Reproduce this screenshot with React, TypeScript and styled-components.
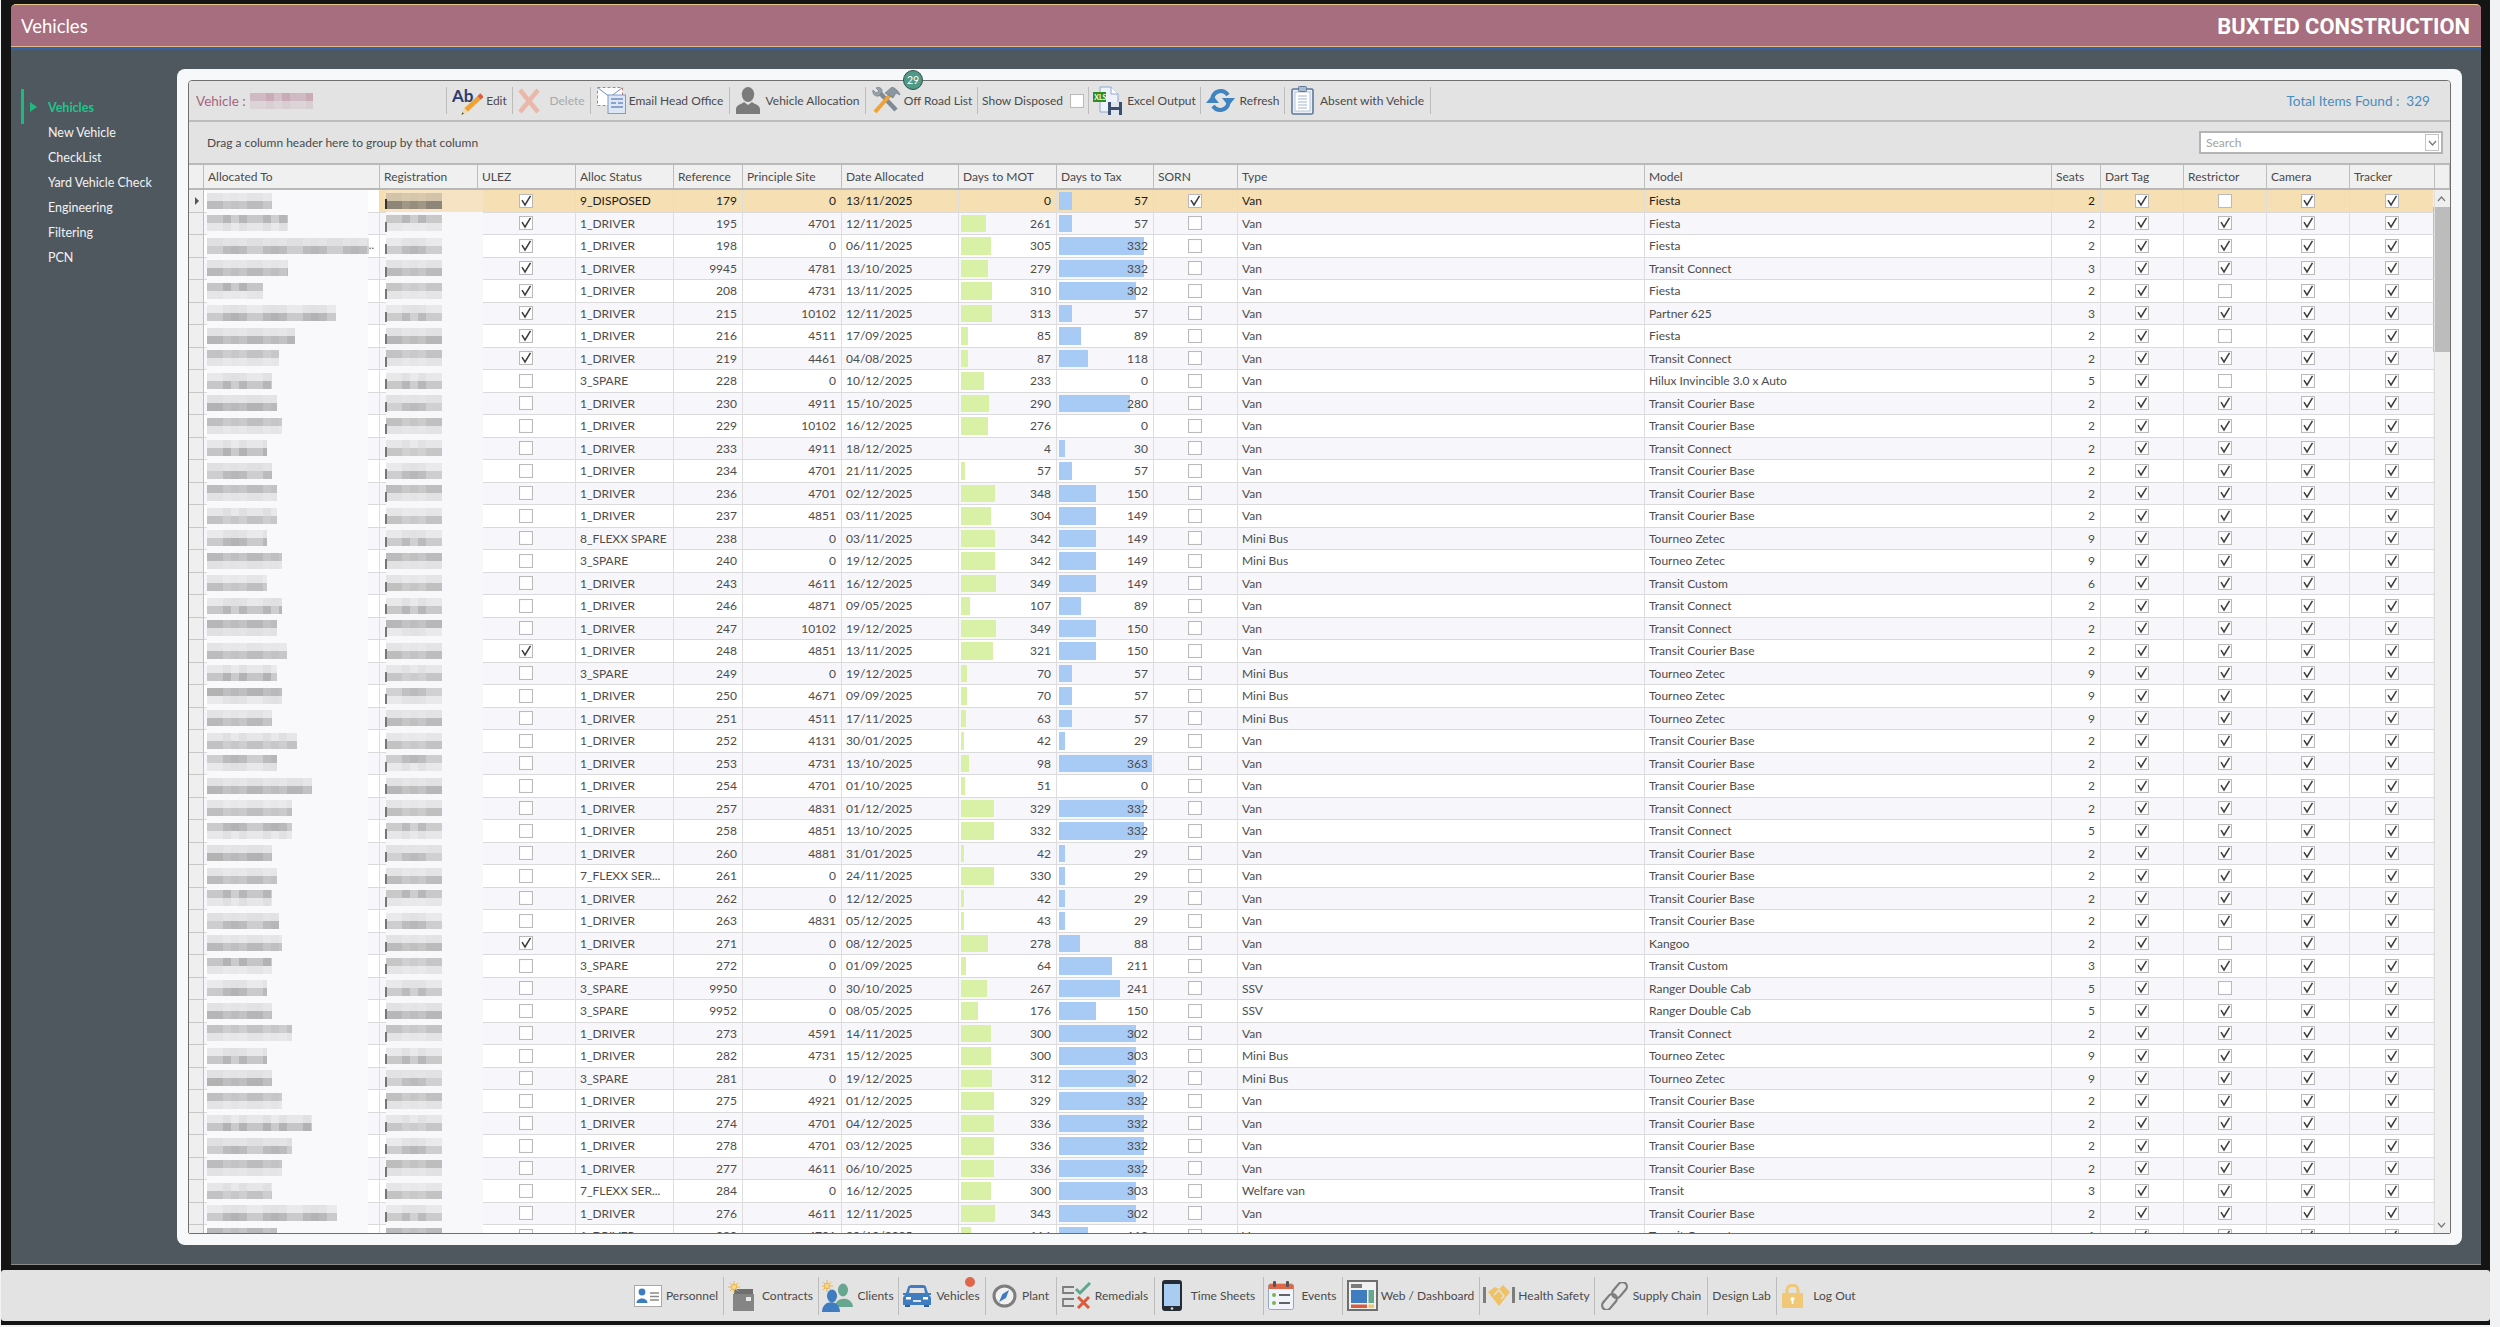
import React from 'react';
import styled, { createGlobalStyle } from 'styled-components';

const GlobalStyle = createGlobalStyle`
    * { box-sizing: border-box; }
    html, body { margin: 0; padding: 0; }
    body {
        width: 2500px;
        height: 1327px;
        overflow: hidden;
        background: #f1f2f3;
        font-family: Lato, 'Open Sans', sans-serif;
        font-size: 12px;
        color: #4a4a4a;
    }
`;

const COLUMNS = '15px 176px 98px 98px 98px 69px 99px 117px 98px 97px 84px 407px 407px 49px 83px 83px 83px 85px';

/* ---------- frame ---------- */

const Shell = styled.div`
    width: 2489px;
    height: 1325px;
    margin-left: 1px;
    padding-top: 4px;
    background: #141414;
    display: flex;
    flex-direction: column;
`;

const TitleBar = styled.header`
    height: 46px;
    margin: 0 9px 0 10px;
    padding: 0 11px 0 10px;
    background: #a76e80;
    border-top: 1px solid #e8c88a;
    border-bottom: 3px solid #2f62a8;
    box-shadow: inset 0 -1px 0 #e3b98c;
    border-radius: 5px 5px 0 0;
    display: flex;
    align-items: center;
    justify-content: space-between;
    color: #fff;
`;

const PageTitle = styled.h1`
    margin: 0;
    font-size: 18.5px;
    font-weight: 400;
`;

const Company = styled.div`
    font-family: Roboto, 'Liberation Sans', sans-serif;
    font-size: 21.9px;
    font-weight: 700;
`;

const Main = styled.main`
    flex: 1;
    min-height: 0;
    margin: 0 9px 0 10px;
    background: #50585f;
    display: flex;
    padding: 19px 19px 19px 0;
`;

const Sidebar = styled.nav`
    width: 166px;
    padding-top: 26px;
`;

const SideItem = styled.div<{ $active?: boolean }>`
    position: relative;
    height: 25px;
    padding-left: 37px;
    line-height: 25px;
    font-size: 12.5px;
    color: ${(p) => (p.$active ? '#22c48a' : '#f2f2f2')};
    font-weight: ${(p) => (p.$active ? 700 : 400)};
    ${(p) =>
        p.$active &&
        `
        &::before {
            content: '';
            position: absolute;
            left: 10px;
            top: -6px;
            width: 3px;
            height: 35px;
            background: #1db97f;
        }
        &::after {
            content: '';
            position: absolute;
            left: 19px;
            top: 7px;
            border-left: 7px solid #1db97f;
            border-top: 5px solid transparent;
            border-bottom: 5px solid transparent;
        }
    `}
`;

const Card = styled.section`
    flex: 1;
    min-width: 0;
    padding: 11px;
    background: #f7f8fa;
    border-radius: 8px;
    display: flex;
`;

const Panel = styled.div`
    flex: 1;
    min-width: 0;
    border: 1px solid #6f6f6f;
    border-radius: 4px 4px 2px 2px;
    display: flex;
    flex-direction: column;
    background: #fff;
`;

/* ---------- toolbar ---------- */

const Toolbar = styled.div`
    height: 41px;
    flex: none;
    background: #e3e3e3;
    border-bottom: 2px solid #bdbdbd;
    border-radius: 3px 3px 0 0;
    display: flex;
    align-items: center;
`;

const VehicleBox = styled.div`
    width: 257px;
    padding-left: 7px;
    display: flex;
    align-items: center;
    gap: 4px;
    font-size: 13.5px;
    color: #a5637d;
`;

const ToolButton = styled.div<{ $w: number; $gap?: number; $first?: boolean; $muted?: boolean }>`
    position: relative;
    width: ${(p) => p.$w}px;
    height: 27px;
    flex: none;
    display: flex;
    align-items: center;
    justify-content: center;
    gap: ${(p) => p.$gap ?? 4}px;
    white-space: nowrap;
    border-right: 1px solid #bcbcbc;
    border-left: ${(p) => (p.$first ? '1px solid #bcbcbc' : '0')};
    color: ${(p) => (p.$muted ? '#a9a9a9' : '#4a4a4a')};
`;

const Badge = styled.span`
    position: absolute;
    left: 37px;
    top: -17px;
    width: 20px;
    height: 20px;
    border-radius: 50%;
    background: #4f9a86;
    border: 1px solid #2f4f4f;
    color: #fff;
    font-size: 10.5px;
    line-height: 18px;
    text-align: center;
`;

const TotalFound = styled.div`
    margin-left: auto;
    padding-right: 20px;
    font-size: 13.6px;
    color: #4a8cbe;
`;

const GroupBar = styled.div`
    height: 43px;
    flex: none;
    padding: 0 7px 0 18px;
    background: #e3e3e3;
    border-bottom: 2px solid #b9b9b9;
    display: flex;
    align-items: center;
    justify-content: space-between;
`;

const SearchWrap = styled.div`
    width: 244px;
    height: 23px;
    padding: 0 2px 0 5px;
    background: #fff;
    border: 2px solid #b4b4b4;
    display: flex;
    align-items: center;
`;

const SearchInput = styled.input`
    flex: 1;
    min-width: 0;
    border: 0;
    outline: 0;
    padding: 0;
    font: inherit;
    background: transparent;
    &::placeholder { color: #a3a3a3; }
`;

const SearchDrop = styled.div`
    width: 14px;
    height: 17px;
    border: 1px solid #c4c4c4;
    color: #777;
    display: flex;
    align-items: center;
    justify-content: center;
`;

/* ---------- grid ---------- */

const HeaderRow = styled.div`
    height: 25px;
    flex: none;
    display: grid;
    grid-template-columns: ${COLUMNS} 1fr;
    background: #f0f0f0;
    border-bottom: 2px solid #b8b8b8;
`;

const HeadCell = styled.div`
    padding-left: 4px;
    line-height: 23px;
    white-space: nowrap;
    overflow: hidden;
    border-right: 1px solid #bdbdbd;
`;

const GridBody = styled.div`
    flex: 1;
    min-height: 0;
    display: flex;
    overflow: hidden;
`;

const Rows = styled.div`
    flex: 1;
    min-width: 0;
`;

const Row = styled.div<{ $bg: string; $dark?: boolean }>`
    height: 22.5px;
    display: grid;
    grid-template-columns: ${COLUMNS};
    background: ${(p) => p.$bg};
    color: ${(p) => (p.$dark ? '#1c1c1c' : '#4c4c4c')};
`;

const Cell = styled.div<{ $align?: string; $bg?: string }>`
    position: relative;
    min-width: 0;
    padding: 0 5px 0 4px;
    display: flex;
    align-items: center;
    justify-content: ${(p) => p.$align ?? 'flex-start'};
    white-space: nowrap;
    overflow: hidden;
    background: ${(p) => p.$bg ?? 'transparent'};
    border-right: 1px solid #dedede;
    border-bottom: 1px solid #dadada;
`;

const Indicator = styled.div<{ $current?: boolean }>`
    background: #efefef;
    border-right: 1px solid #bdbdbd;
    border-bottom: 1px solid #c8c8c8;
    position: relative;
    ${(p) =>
        p.$current &&
        `
        &::after {
            content: '';
            position: absolute;
            left: 6px;
            top: 7px;
            border-left: 4px solid #555;
            border-top: 4px solid transparent;
            border-bottom: 4px solid transparent;
        }
    `}
`;

const Bar = styled.span<{ $color: string }>`
    position: absolute;
    left: 2px;
    top: 2px;
    bottom: 2px;
    background: ${(p) => p.$color};
`;

const BarValue = styled.span`
    position: relative;
`;

const Overlap = styled.div`
    position: relative;
    min-width: 0;
    height: 22.5px;
`;

const NameCover = styled.div<{ $bg: string }>`
    position: absolute;
    z-index: 1;
    left: 3px;
    right: 11px;
    top: -1px;
    bottom: -1px;
    background: ${(p) => p.$bg};
    display: flex;
    flex-direction: column;
    justify-content: center;
`;

const RegCover = styled.div<{ $bg: string }>`
    position: absolute;
    z-index: 1;
    left: 6px;
    width: 97px;
    top: -1px;
    bottom: -1px;
    background: ${(p) => p.$bg};
    display: flex;
    flex-direction: column;
    justify-content: center;
`;

const Peek = styled.span<{ $dark?: boolean }>`
    position: absolute;
    z-index: 2;
    left: 5px;
    top: 9px;
    width: 1.5px;
    height: 10px;
    background: ${(p) => (p.$dark ? '#333' : '#777')};
`;

const Strip = styled.div`
    height: 8px;
    filter: blur(0.4px);
`;

const NameRow = styled.div<{ $bg: string }>`
    height: 22.5px;
    border-bottom: 1px solid #dadada;
    border-right: 1px solid #dedede;
    background: ${(p) => p.$bg};
    position: relative;
`;

const RegRow = styled(NameRow)`
    overflow: visible;
`;

const Dots = styled.span`
    position: absolute;
    z-index: 2;
    right: 5px;
    top: 3px;
    font-size: 11px;
`;

const Box = styled.span`
    width: 14px;
    height: 14px;
    flex: none;
    background: #fff;
    border: 1px solid #bababa;
    box-shadow: inset 0 0 1px #ddd;
    display: flex;
    align-items: center;
    justify-content: center;
`;

const ScrollBar = styled.div`
    width: 17px;
    flex: none;
    background: #efefef;
    display: flex;
    flex-direction: column;
    color: #777;
`;

const ScrollArrow = styled.div`
    height: 17px;
    flex: none;
    display: flex;
    align-items: center;
    justify-content: center;
`;

const ScrollThumb = styled.div`
    height: 145px;
    flex: none;
    background: #bcbcbc;
`;

const ScrollTrack = styled.div`
    flex: 1;
`;

/* ---------- footer ---------- */

const FooterLine = styled.div`
    height: 6px;
    flex: none;
    margin: 0 9px 0 10px;
    border-top: 1px solid #8a8a8a;
`;

const Footer = styled.footer`
    height: 51px;
    flex: none;
    margin-bottom: 4px;
    background: #e3e3e3;
    border-radius: 3px;
    display: flex;
    align-items: center;
    justify-content: center;
`;

const FooterItem = styled.div<{ $w: number; $gap: number; $last?: boolean }>`
    position: relative;
    width: ${(p) => p.$w}px;
    height: 38px;
    flex: none;
    display: flex;
    align-items: center;
    justify-content: center;
    gap: ${(p) => p.$gap}px;
    white-space: nowrap;
    border-right: ${(p) => (p.$last ? '0' : '1px solid #bcbcbc')};
`;

const AlertDot = styled.span`
    position: absolute;
    right: 10px;
    top: 0;
    width: 10px;
    height: 10px;
    border-radius: 50%;
    background: #e0664a;
`;

/* ---------- icons ---------- */

const CheckMark = () => (
    <svg width="12" height="12" viewBox="0 0 12 12">
        <path d="M2 5.2 L5 10 L10.5 0.8" fill="none" stroke="#3d3d3d" strokeWidth="1.5" />
    </svg>
);

const Chevron = ({ up }: { up?: boolean }) => (
    <svg width="9" height="6" viewBox="0 0 9 6">
        <path d={up ? 'M1 5 L4.5 1 L8 5' : 'M1 1 L4.5 5 L8 1'} fill="none" stroke="currentColor" strokeWidth="1.2" />
    </svg>
);

const EditIcon = () => (
    <svg width="31" height="28" viewBox="0 0 31 28">
        <text x="0" y="15" fontFamily="Lato, sans-serif" fontSize="17" fontWeight="700" fill="#2d3b6e">
            Ab
        </text>
        <path d="M14 23 L27 11" stroke="#f0a335" strokeWidth="5" />
        <path d="M27 11 L30 8" stroke="#d9603f" strokeWidth="5" />
        <path d="M12.2 21 L15.9 25 L9.5 28 Z" fill="#f4d9a6" />
        <path d="M10.6 25.2 L11.8 26.5 L9.5 28 Z" fill="#333" />
    </svg>
);

const DeleteIcon = () => (
    <svg width="22" height="26" viewBox="0 0 22 26">
        <path d="M2 2 L20 24 M20 2 L2 24" stroke="#e9b8aa" strokeWidth="4.5" />
    </svg>
);

const EmailIcon = () => (
    <svg width="29" height="27" viewBox="0 0 29 27">
        <rect x="0.5" y="0.5" width="25" height="18" fill="#fff" stroke="#c77a74" strokeDasharray="3 2" />
        <path d="M1 1 L13 10 L25 1" fill="none" stroke="#6f8fc0" />
        <rect x="11" y="8" width="17.5" height="18.5" fill="#dde6f5" stroke="#7f9cc8" />
        <path d="M14 12 H26 M14 16 H19 M21 16 H26 M14 20 H26" stroke="#6f8fc0" strokeWidth="1.6" />
    </svg>
);

const PersonIcon = () => (
    <svg width="24" height="27" viewBox="0 0 24 27">
        <ellipse cx="12" cy="7.5" rx="6.2" ry="7.5" fill="#7b7b7b" />
        <path d="M0 27 V22 C0 18 6 17 8 15 L12 18 L16 15 C18 17 24 18 24 22 V27 Z" fill="#7b7b7b" />
    </svg>
);

const ToolsIcon = () => (
    <svg width="30" height="27" viewBox="0 0 30 27">
        <path d="M8 5 L25 23" stroke="#7f8a94" strokeWidth="4.5" />
        <path d="M2 3 C1 7 4 10 8 9 L11 5 C12 2 8 -1 5 1 L8 4 L5 6 Z" fill="#98a2ab" stroke="#69747d" strokeWidth="0.6" />
        <path d="M4 25 L20 7" stroke="#f0a335" strokeWidth="4" />
        <path d="M14 6 L21 0 C24 1 28 4 29 8 L25 6 L22 11 Z" fill="#8b96a0" stroke="#69747d" strokeWidth="0.6" />
    </svg>
);

const ExcelIcon = () => (
    <svg width="29" height="29" viewBox="0 0 29 29">
        <path d="M7 1 H18 L25 8 V26 H7 Z" fill="#eef3fb" stroke="#8ea7cc" />
        <path d="M18 1 V8 H25" fill="#fff" stroke="#8ea7cc" />
        <rect x="0" y="6" width="13" height="10" fill="#2f8f1e" />
        <text x="1.2" y="14" fontFamily="Lato, sans-serif" fontSize="7" fontWeight="700" fill="#fff">
            XLS
        </text>
        <rect x="15" y="16" width="14" height="13" fill="#3c4f6e" />
        <rect x="18" y="16" width="8" height="5" fill="#dfe6f0" />
        <rect x="18" y="24" width="8" height="5" fill="#dfe6f0" />
    </svg>
);

const RefreshIcon = () => (
    <svg width="29" height="25" viewBox="0 0 29 25">
        <path d="M6.5 10 C8 3 17 0 22 7" fill="none" stroke="#3f83c0" strokeWidth="4" />
        <path d="M22.5 15 C21 22 12 25 7 18" fill="none" stroke="#3f83c0" strokeWidth="4" />
        <path d="M0 15 L13 15 L6.5 7 Z" fill="#3f83c0" />
        <path d="M16 10 L29 10 L22.5 18 Z" fill="#3f83c0" />
    </svg>
);

const ClipboardIcon = () => (
    <svg width="23" height="29" viewBox="0 0 23 29">
        <rect x="1" y="3" width="21" height="25" rx="1.5" fill="#e9eef7" stroke="#5f7896" strokeWidth="1.6" />
        <rect x="4" y="6" width="15" height="19" fill="#fff" stroke="#b7c4d6" />
        <rect x="7.5" y="0.5" width="8" height="5" rx="1" fill="#a9bcd4" stroke="#5f7896" />
        <path d="M7 10 H16 M7 13 H16 M7 16 H16 M7 19 H16 M7 22 H16" stroke="#9fb3cf" />
    </svg>
);

const PersonnelIcon = () => (
    <svg width="28" height="22" viewBox="0 0 28 22">
        <rect x="0.5" y="0.5" width="27" height="21" fill="#fff" stroke="#a9a9a9" />
        <circle cx="8" cy="7" r="3.4" fill="#3c7cc0" />
        <path d="M2.5 18 C2.5 12 13.5 12 13.5 18 Z" fill="#3c7cc0" />
        <path d="M16 8 H25 M16 11.5 H25 M16 15 H25" stroke="#8a8a8a" strokeWidth="1.5" />
    </svg>
);

const Sun = ({ x, y }: { x: number; y: number }) => (
    <g transform={`translate(${x} ${y})`} stroke="#eeb34a" strokeWidth="1">
        <path d="M0 -6 V6 M-6 0 H6 M-4.2 -4.2 L4.2 4.2 M-4.2 4.2 L4.2 -4.2" />
        <circle r="2.6" fill="#f7d98c" />
    </g>
);

const ContractsIcon = () => (
    <svg width="26" height="30" viewBox="0 0 26 30">
        <path d="M6 8 H25 V13 H6 Z" fill="#6f6f6f" />
        <rect x="5" y="13" width="21" height="17" fill="#858585" />
        <rect x="18" y="16" width="5" height="4" fill="#e8e8e8" />
        <Sun x={6} y={6} />
    </svg>
);

const ClientsIcon = () => (
    <svg width="31" height="32" viewBox="0 0 31 32">
        <ellipse cx="21" cy="10" rx="5" ry="6.5" fill="#68a78f" />
        <path d="M13 27 C12 17 30 15 31 27 Z" fill="#68a78f" />
        <ellipse cx="10" cy="16" rx="5" ry="6.5" fill="#3f7cc0" />
        <path d="M0 32 C0 19 18 19 18 32 Z" fill="#3f7cc0" />
        <Sun x={5} y={6} />
    </svg>
);

const CarIcon = () => (
    <svg width="28" height="22" viewBox="0 0 28 22">
        <path d="M5 2 C5 1 7 0 8 0 H20 C22 0 23 1 23 2 L25 8 L28 8 V10 L26 10 C27 11 28 12 28 13 V20 H0 V13 C0 12 1 11 2 10 L0 10 V8 L3 8 Z" fill="#3f7cc0" />
        <path d="M7 3 H21 L22 8 H6 Z" fill="#e3e3e3" />
        <rect x="3" y="12" width="5" height="2.5" fill="#fff" />
        <rect x="20" y="12" width="5" height="2.5" fill="#fff" />
        <rect x="10" y="15" width="8" height="2" fill="#e3e3e3" />
        <rect x="2" y="20" width="5" height="2" fill="#2f5f96" />
        <rect x="21" y="20" width="5" height="2" fill="#2f5f96" />
    </svg>
);

const PlantIcon = () => (
    <svg width="25" height="24" viewBox="0 0 25 24">
        <ellipse cx="12.5" cy="12" rx="10.5" ry="10" fill="#f1f1f1" stroke="#7d7d7d" strokeWidth="3" />
        <path d="M17 6 L14 14 L7 18 L10.5 10 Z" fill="#3f7cc0" />
    </svg>
);

const RemedialsIcon = () => (
    <svg width="29" height="27" viewBox="0 0 29 27">
        <path d="M12 5 H1 V11 H12 M12 17 H1 V24 H12" fill="none" stroke="#7d7d7d" strokeWidth="1.8" />
        <path d="M14 7 L18 11 L28 1" fill="none" stroke="#5fa68f" strokeWidth="3" />
        <path d="M16 15 L27 26 M27 15 L16 26" stroke="#dd5b3c" strokeWidth="3" />
    </svg>
);

const PhoneIcon = () => (
    <svg width="20" height="31" viewBox="0 0 20 31">
        <rect x="0" y="0" width="20" height="31" rx="3" fill="#262c36" />
        <rect x="2" y="4" width="16" height="22" fill="#a9cdf0" />
        <circle cx="10" cy="28.5" r="1.3" fill="#ddd" />
    </svg>
);

const CalendarIcon = () => (
    <svg width="26" height="29" viewBox="0 0 26 29">
        <rect x="0.5" y="3" width="25" height="25.5" rx="2" fill="#f1f5fb" stroke="#8ea7cc" />
        <path d="M0.5 5 C0.5 4 1.5 3 2.5 3 H23.5 C24.5 3 25.5 4 25.5 5 V8 H0.5 Z" fill="#e0664a" />
        <rect x="5" y="0" width="3" height="6" rx="1" fill="#555" />
        <rect x="18" y="0" width="3" height="6" rx="1" fill="#555" />
        <circle cx="6" cy="14" r="2" fill="#7fb24f" />
        <circle cx="6" cy="22" r="2" fill="#7fb24f" />
        <path d="M11 14 H22 M11 22 H22" stroke="#333" strokeWidth="1.6" />
    </svg>
);

const DashboardIcon = () => (
    <svg width="31" height="31" viewBox="0 0 31 31">
        <rect x="1" y="1" width="29" height="29" fill="#f1f1f1" stroke="#6f6f6f" strokeWidth="2" />
        <rect x="4" y="4" width="11" height="4" fill="#7b7b7b" />
        <rect x="4" y="10" width="16" height="13" fill="#3f7cc0" />
        <rect x="21.5" y="10" width="5.5" height="13" fill="#68a78f" />
        <rect x="4" y="24.5" width="16" height="3.5" fill="#dd5b3c" />
        <rect x="21.5" y="24.5" width="5.5" height="3.5" fill="#f0c868" />
    </svg>
);

const HandshakeIcon = () => (
    <svg width="32" height="21" viewBox="0 0 32 21">
        <rect x="0" y="2" width="3" height="16" fill="#7d7d7d" />
        <rect x="29" y="2" width="3" height="16" fill="#7d7d7d" />
        <path d="M5 7 L12 2 L16 4 L20 0 L27 7 L16 21 Z" fill="#f0c266" />
        <path d="M11 10 L16 5 L21 11 L18 14" fill="none" stroke="#e3e3e3" strokeWidth="1.4" />
    </svg>
);

const ChainIcon = () => (
    <svg width="29" height="28" viewBox="0 0 29 28">
        <g fill="none" stroke="#7d7d7d" strokeWidth="2.2">
            <rect x="15" y="-1" width="9" height="18" rx="4.5" transform="rotate(40 19.5 8)" />
            <rect x="5" y="11" width="9" height="18" rx="4.5" transform="rotate(40 9.5 20)" />
        </g>
    </svg>
);

const LockIcon = () => (
    <svg width="21" height="24" viewBox="0 0 21 24">
        <path d="M5 10 V6 C5 -0.5 16 -0.5 16 6 V10" fill="none" stroke="#f0c878" strokeWidth="3" />
        <rect x="0" y="9" width="21" height="15" rx="1" fill="#f0c878" />
        <circle cx="10.5" cy="15" r="2" fill="#fff" />
        <rect x="9.7" y="15" width="1.6" height="5" fill="#fff" />
    </svg>
);

/* ---------- data ---------- */

type Vehicle = {
    status: string;
    ref: number;
    site: number;
    date: string;
    mot: number;
    tax: number;
    type: string;
    model: string;
    seats: number;
};

const TCB = 'Transit Courier Base';
const TC = 'Transit Connect';
const TZ = 'Tourneo Zetec';
const D = '1_DRIVER';
const S = '3_SPARE';
const F = '7_FLEXX SER...';
const MB = 'Mini Bus';

const v = (
    status: string,
    ref: number,
    site: number,
    date: string,
    mot: number,
    tax: number,
    model: string,
    seats: number,
    type = 'Van',
): Vehicle => ({ status, ref, site, date, mot, tax, type, model, seats });

const vehicles: Vehicle[] = [
    v('9_DISPOSED', 179, 0, '13/11/2025', 0, 57, 'Fiesta', 2),
    v(D, 195, 4701, '12/11/2025', 261, 57, 'Fiesta', 2),
    v(D, 198, 0, '06/11/2025', 305, 332, 'Fiesta', 2),
    v(D, 9945, 4781, '13/10/2025', 279, 332, TC, 3),
    v(D, 208, 4731, '13/11/2025', 310, 302, 'Fiesta', 2),
    v(D, 215, 10102, '12/11/2025', 313, 57, 'Partner 625', 3),
    v(D, 216, 4511, '17/09/2025', 85, 89, 'Fiesta', 2),
    v(D, 219, 4461, '04/08/2025', 87, 118, TC, 2),
    v(S, 228, 0, '10/12/2025', 233, 0, 'Hilux Invincible 3.0 x Auto', 5),
    v(D, 230, 4911, '15/10/2025', 290, 280, TCB, 2),
    v(D, 229, 10102, '16/12/2025', 276, 0, TCB, 2),
    v(D, 233, 4911, '18/12/2025', 4, 30, TC, 2),
    v(D, 234, 4701, '21/11/2025', 57, 57, TCB, 2),
    v(D, 236, 4701, '02/12/2025', 348, 150, TCB, 2),
    v(D, 237, 4851, '03/11/2025', 304, 149, TCB, 2),
    v('8_FLEXX SPARE', 238, 0, '03/11/2025', 342, 149, TZ, 9, MB),
    v(S, 240, 0, '19/12/2025', 342, 149, TZ, 9, MB),
    v(D, 243, 4611, '16/12/2025', 349, 149, 'Transit Custom', 6),
    v(D, 246, 4871, '09/05/2025', 107, 89, TC, 2),
    v(D, 247, 10102, '19/12/2025', 349, 150, TC, 2),
    v(D, 248, 4851, '13/11/2025', 321, 150, TCB, 2),
    v(S, 249, 0, '19/12/2025', 70, 57, TZ, 9, MB),
    v(D, 250, 4671, '09/09/2025', 70, 57, TZ, 9, MB),
    v(D, 251, 4511, '17/11/2025', 63, 57, TZ, 9, MB),
    v(D, 252, 4131, '30/01/2025', 42, 29, TCB, 2),
    v(D, 253, 4731, '13/10/2025', 98, 363, TCB, 2),
    v(D, 254, 4701, '01/10/2025', 51, 0, TCB, 2),
    v(D, 257, 4831, '01/12/2025', 329, 332, TC, 2),
    v(D, 258, 4851, '13/10/2025', 332, 332, TC, 5),
    v(D, 260, 4881, '31/01/2025', 42, 29, TCB, 2),
    v(F, 261, 0, '24/11/2025', 330, 29, TCB, 2),
    v(D, 262, 0, '12/12/2025', 42, 29, TCB, 2),
    v(D, 263, 4831, '05/12/2025', 43, 29, TCB, 2),
    v(D, 271, 0, '08/12/2025', 278, 88, 'Kangoo', 2),
    v(S, 272, 0, '01/09/2025', 64, 211, 'Transit Custom', 3),
    v(S, 9950, 0, '30/10/2025', 267, 241, 'Ranger Double Cab', 5, 'SSV'),
    v(S, 9952, 0, '08/05/2025', 176, 150, 'Ranger Double Cab', 5, 'SSV'),
    v(D, 273, 4591, '14/11/2025', 300, 302, TC, 2),
    v(D, 282, 4731, '15/12/2025', 300, 303, TZ, 9, MB),
    v(S, 281, 0, '19/12/2025', 312, 302, TZ, 9, MB),
    v(D, 275, 4921, '01/12/2025', 329, 332, TCB, 2),
    v(D, 274, 4701, '04/12/2025', 336, 332, TCB, 2),
    v(D, 278, 4701, '03/12/2025', 336, 332, TCB, 2),
    v(D, 277, 4611, '06/10/2025', 336, 332, TCB, 2),
    v(F, 284, 0, '16/12/2025', 300, 303, 'Transit', 3, 'Welfare van'),
    v(D, 276, 4611, '12/11/2025', 343, 302, TCB, 2),
    v(D, 280, 4701, '30/10/2025', 116, 118, TC, 1),
];

const nameWidths = [
    65, 81, 162, 81, 56, 129, 88, 72, 65, 70, 75, 60, 65, 70, 70, 60, 75, 60, 75, 70, 80, 70, 75, 65, 90, 70, 105, 85,
    85, 65, 70, 65, 72, 75, 65, 60, 65, 85, 60, 65, 75, 105, 85, 75, 65, 130, 70,
];

const ulezRows = [0, 1, 2, 3, 4, 5, 6, 7, 20, 33];
const restrictorOff = [0, 4, 6, 8, 33, 35];

const headers = [
    '',
    'Allocated To',
    'Registration',
    'ULEZ',
    'Alloc Status',
    'Reference',
    'Principle Site',
    'Date Allocated',
    'Days to MOT',
    'Days to Tax',
    'SORN',
    'Type',
    'Model',
    'Seats',
    'Dart Tag',
    'Restrictor',
    'Camera',
    'Tracker',
    '',
];

const sideItems = ['New Vehicle', 'CheckList', 'Yard Vehicle Check', 'Engineering', 'Filtering', 'PCN'];

const footerItems = [
    { label: 'Personnel', w: 94, gap: 4, icon: <PersonnelIcon /> },
    { label: 'Contracts', w: 95, gap: 8, icon: <ContractsIcon /> },
    { label: 'Clients', w: 80, gap: 4, icon: <ClientsIcon /> },
    { label: 'Vehicles', w: 87, gap: 5, icon: <CarIcon />, dot: true },
    { label: 'Plant', w: 71, gap: 5, icon: <PlantIcon /> },
    { label: 'Remedials', w: 98, gap: 4, icon: <RemedialsIcon /> },
    { label: 'Time Sheets', w: 109, gap: 9, icon: <PhoneIcon /> },
    { label: 'Events', w: 79, gap: 7, icon: <CalendarIcon /> },
    { label: 'Web / Dashboard', w: 137, gap: 3, icon: <DashboardIcon /> },
    { label: 'Health Safety', w: 115, gap: 3, icon: <HandshakeIcon /> },
    { label: 'Supply Chain', w: 113, gap: 4, icon: <ChainIcon /> },
    { label: 'Design Lab', w: 69, gap: 0 },
    { label: 'Log Out', w: 85, gap: 10, icon: <LockIcon /> },
];

/* ---------- pieces ---------- */

function motWidth(value: number) {
    return Math.max(0, 0.104 * value - 1.7);
}

function taxWidth(value: number) {
    return Math.max(0, 0.26 * value - 1.6);
}

// pixelated stand-in for the blurred-out names and registrations
const Mosaic = ({ width, seed, rgb = '70,70,70', strong = 0.24 }: { width: number; seed: number; rgb?: string; strong?: number }) => {
    const cols = Math.ceil(width / 8);
    const strip = (offset: number, base: number) => {
        const stops: string[] = [];
        for (let i = 0; i < cols; i++) {
            const n = (seed * 37 + i * 17 + offset * 11 + i * i * 3) % 10;
            const a = (base + (n / 10) * base * 0.7).toFixed(3);
            stops.push(`rgba(${rgb},${a}) ${i * 8}px ${(i + 1) * 8}px`);
        }
        return `linear-gradient(90deg, ${stops.join(',')})`;
    };
    const topFirst = seed % 3 === 0;
    return (
        <>
            <Strip style={{ width, background: strip(1, topFirst ? strong : strong * 0.35) }} />
            <Strip style={{ width, background: strip(2, topFirst ? strong * 0.35 : strong) }} />
        </>
    );
};

const Check = ({ on }: { on: boolean }) => <Box>{on && <CheckMark />}</Box>;

const VehicleRow = ({ item, index }: { item: Vehicle; index: number }) => {
    const active = index === 0;
    const bg = active ? '#f6dfb3' : index % 2 === 1 ? '#f7f6fa' : '#ffffff';
    return (
        <Row $bg={bg} $dark={active}>
            <Indicator $current={active} />
            <Overlap>
                <NameRow $bg={active ? '#ffffff' : bg}>
                    <NameCover $bg="#f9f8fb">
                        <Mosaic width={nameWidths[index]} seed={index + 2} />
                    </NameCover>
                    {index === 2 && <Dots>..</Dots>}
                </NameRow>
            </Overlap>
            <Overlap>
                <RegRow $bg={bg}>
                    <Peek $dark={active} />
                    <RegCover $bg={active ? '#f5e3c3' : '#f8f8fa'}>
                        <Mosaic width={56} seed={index + 5} strong={active ? 0.4 : 0.22} />
                    </RegCover>
                </RegRow>
            </Overlap>
            <Cell $align="center">
                <Check on={ulezRows.includes(index)} />
            </Cell>
            <Cell>{item.status}</Cell>
            <Cell $align="flex-end">{item.ref}</Cell>
            <Cell $align="flex-end">{item.site}</Cell>
            <Cell>{item.date}</Cell>
            <Cell $align="flex-end">
                <Bar $color="#d8f1a6" style={{ width: motWidth(item.mot) }} />
                <BarValue>{item.mot}</BarValue>
            </Cell>
            <Cell $align="flex-end">
                <Bar $color="#a8cbf5" style={{ width: taxWidth(item.tax) }} />
                <BarValue>{item.tax}</BarValue>
            </Cell>
            <Cell $align="center">
                <Check on={active} />
            </Cell>
            <Cell>{item.type}</Cell>
            <Cell>{item.model}</Cell>
            <Cell $align="flex-end">{item.seats}</Cell>
            <Cell $align="center">
                <Check on />
            </Cell>
            <Cell $align="center">
                <Check on={!restrictorOff.includes(index)} />
            </Cell>
            <Cell $align="center">
                <Check on />
            </Cell>
            <Cell $align="center">
                <Check on />
            </Cell>
        </Row>
    );
};

export default function App() {
    return (
        <>
            <GlobalStyle />
            <Shell>
                <TitleBar>
                    <PageTitle>Vehicles</PageTitle>
                    <Company>BUXTED CONSTRUCTION</Company>
                </TitleBar>
                <Main>
                    <Sidebar>
                        <SideItem $active>Vehicles</SideItem>
                        {sideItems.map((item) => (
                            <SideItem key={item}>{item}</SideItem>
                        ))}
                    </Sidebar>
                    <Card>
                        <Panel>
                            <Toolbar>
                                <VehicleBox>
                                    Vehicle :
                                    <div>
                                        <Mosaic width={63} seed={3} rgb="165,99,125" strong={0.28} />
                                    </div>
                                </VehicleBox>
                                <ToolButton $w={67} $first $gap={3}>
                                    <EditIcon />
                                    Edit
                                </ToolButton>
                                <ToolButton $w={78} $gap={9} $muted>
                                    <DeleteIcon />
                                    Delete
                                </ToolButton>
                                <ToolButton $w={139} $gap={3}>
                                    <EmailIcon />
                                    Email Head Office
                                </ToolButton>
                                <ToolButton $w={136} $gap={6}>
                                    <PersonIcon />
                                    Vehicle Allocation
                                </ToolButton>
                                <ToolButton $w={112} $gap={3}>
                                    <Badge>29</Badge>
                                    <ToolsIcon />
                                    Off Road List
                                </ToolButton>
                                <ToolButton $w={111} $gap={7}>
                                    Show Disposed
                                    <Box />
                                </ToolButton>
                                <ToolButton $w={112} $gap={5}>
                                    <ExcelIcon />
                                    Excel Output
                                </ToolButton>
                                <ToolButton $w={84} $gap={5}>
                                    <RefreshIcon />
                                    Refresh
                                </ToolButton>
                                <ToolButton $w={146} $gap={6}>
                                    <ClipboardIcon />
                                    Absent with Vehicle
                                </ToolButton>
                                <TotalFound>Total Items Found :&nbsp; 329</TotalFound>
                            </Toolbar>
                            <GroupBar>
                                <span>Drag a column header here to group by that column</span>
                                <SearchWrap>
                                    <SearchInput placeholder="Search" readOnly />
                                    <SearchDrop>
                                        <Chevron />
                                    </SearchDrop>
                                </SearchWrap>
                            </GroupBar>
                            <HeaderRow>
                                {headers.map((label, i) => (
                                    <HeadCell key={i}>{label}</HeadCell>
                                ))}
                            </HeaderRow>
                            <GridBody>
                                <Rows>
                                    {vehicles.map((item, i) => (
                                        <VehicleRow key={item.ref} item={item} index={i} />
                                    ))}
                                </Rows>
                                <ScrollBar>
                                    <ScrollArrow>
                                        <Chevron up />
                                    </ScrollArrow>
                                    <ScrollThumb />
                                    <ScrollTrack />
                                    <ScrollArrow>
                                        <Chevron />
                                    </ScrollArrow>
                                </ScrollBar>
                            </GridBody>
                        </Panel>
                    </Card>
                </Main>
                <FooterLine />
                <Footer>
                    {footerItems.map((item, i) => (
                        <FooterItem key={item.label} $w={item.w} $gap={item.gap} $last={i === footerItems.length - 1}>
                            {item.icon}
                            {item.label}
                            {item.dot && <AlertDot />}
                        </FooterItem>
                    ))}
                </Footer>
            </Shell>
        </>
    );
}
